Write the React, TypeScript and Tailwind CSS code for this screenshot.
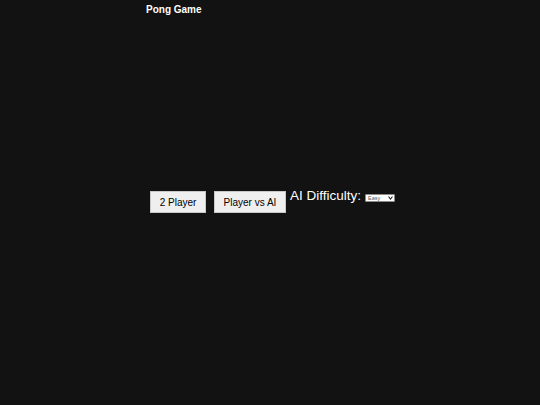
export default function App() {
  return (
    <div className="min-h-screen w-full bg-[#121212] font-['Liberation_Sans',Arial,sans-serif] text-white">
      <div className="mx-auto flex w-[248px] flex-col">
        {/* Title */}
        <h1 className="mt-[4px] text-[10px] font-bold leading-[12px]">Pong Game</h1>

        {/* Game canvas area (blank) */}
        <div className="h-[172px]" />

        {/* Controls */}
        <div className="flex items-start whitespace-nowrap pl-[4px]">
          <button className="mt-[3px] h-[22px] w-[56px] shrink-0 border border-[#c8c8c8] bg-[#efefef] text-[10px] text-black">
            2 Player
          </button>
          <button className="ml-[8px] mt-[3px] h-[22px] w-[72px] shrink-0 border border-[#c8c8c8] bg-[#efefef] text-[10px] text-black">
            Player vs AI
          </button>
          <span className="ml-[4px] shrink-0 text-[13.5px] leading-[15.5px]">AI Difficulty:</span>
          <div className="relative ml-[4px] mt-[6px] shrink-0">
            <select className="block h-[8px] w-[30px] appearance-none rounded-[1px] border border-[#8a8a8a] bg-white pl-[2px] text-[5.5px] leading-[6px] text-[#555]">
              <option>Easy</option>
              <option>Medium</option>
              <option>Hard</option>
            </select>
            <svg
              className="pointer-events-none absolute right-[2px] top-[2px]"
              width="5"
              height="4"
              viewBox="0 0 10 8"
            >
              <path d="M1 1 L5 6 L9 1" fill="none" stroke="#222" strokeWidth="2.2" />
            </svg>
          </div>
        </div>
      </div>
    </div>
  )
}
